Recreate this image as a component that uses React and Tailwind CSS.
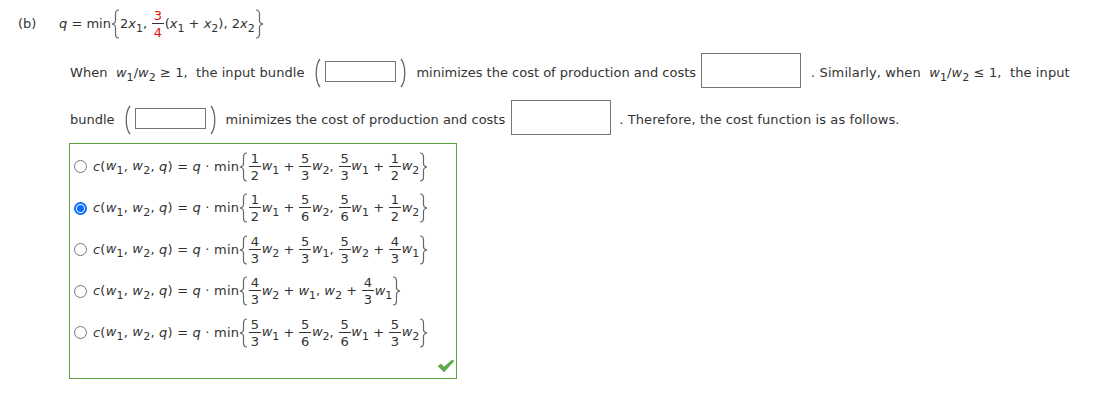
import React from 'react';

function Frac({ n, d, red }) {
  return (
    <span className={`inline-flex flex-col items-center align-middle mx-[0.750px] leading-none w-[12px] ${red ? 'text-[#e0101a]' : ''}`}>
      <span className="h-[16px] leading-[15px] border-b border-[#333] w-full text-center">{n}</span>
      <span className="h-[16px] leading-[17px]">{d}</span>
    </span>
  );
}

function V({ c, s }) {
  return (
    <span className="whitespace-nowrap">
      <i>{c}</i>
      {s && <span className="text-[11px] relative top-[4px]">{s}</span>}
    </span>
  );
}

function Brace({ right }) {
  return (
    <svg width="9" height="30" viewBox="0 0 9 30" className={`inline-block align-middle ${right ? '-scale-x-100' : ''}`}>
      <path d="M8 1 C5 1 4.500 2.500 4.500 5 L4.500 11.500 C4.500 13.500 3.500 14.500 1 15 C3.500 15.500 4.500 16.500 4.500 18.500 L4.500 25 C4.500 27.500 5 29 8 29" fill="none" stroke="#666" strokeWidth="1.200" />
    </svg>
  );
}

function Paren({ right }) {
  return (
    <svg width="9" height="30" viewBox="0 0 9 30" className={`inline-block shrink-0 ${right ? '-scale-x-100' : ''}`}>
      <path d="M7 1 C2 7 2 23 7 29" fill="none" stroke="#666" strokeWidth="1.300" />
    </svg>
  );
}

function Term({ n, d, v, s }) {
  return (
    <>
      <Frac n={n} d={d} />
      <V c={v} s={s} />
    </>
  );
}

function Option({ checked, children }) {
  return (
    <div className="h-[41.500px] flex items-center whitespace-nowrap">
      {checked ? (
        <span className="w-[13px] h-[13px] rounded-full border-2 border-[#0a6cff] flex items-center justify-center shrink-0">
          <span className="w-[7px] h-[7px] rounded-full bg-[#0a6cff]" />
        </span>
      ) : (
        <span className="w-[13px] h-[13px] rounded-full border border-[#767676] bg-white shrink-0" />
      )}
      <span className="ml-[6px]">
        <span className="tracking-[0.200px]">
          <V c="c" />(<V c="w" s="1" />, <V c="w" s="2" />, <V c="q" />) = <V c="q" /> · min
        </span>
        <Brace />
        {children}
        <Brace right />
      </span>
    </div>
  );
}

export default function App() {
  return (
    <div className="w-[1096px] h-[407px] bg-white text-[#333] text-[13px] font-['Verdana','DejaVu_Sans',sans-serif] pt-[6px] pl-[18px]">
      <div className="flex items-center h-[36px] whitespace-nowrap">
        <span className="w-[41px]">(b)</span>
        <span>
          <V c="q" /> = min
          <Brace />
          2<V c="x" s="1" />, <Frac n="3" d="4" red />(<V c="x" s="1" /> + <V c="x" s="2" />), 2<V c="x" s="2" />
          <Brace right />
        </span>
      </div>

      <div className="ml-[52px]">
        <div className="flex items-center h-[35px] mt-[11px] whitespace-nowrap">
          <span className="pt-[4px] tracking-[0.050px]">When&nbsp; <V c="w" s="1" />/<V c="w" s="2" /> ≥ 1,&nbsp; the input bundle</span>
          <span className="ml-[9px] pt-[4px] flex items-center">
            <Paren />
            <span className="w-[71px] h-[21px] border border-[#767676] mx-[3px] -mt-[2px]" />
            <Paren right />
          </span>
          <span className="ml-[8px] pt-[4px]">minimizes the cost of production and costs</span>
          <span className="w-[100px] h-[35px] border border-[#767676] ml-[5px]" />
          <span className="ml-[10px] pt-[4px] tracking-[0.100px]">. Similarly, when&nbsp; <V c="w" s="1" />/<V c="w" s="2" /> ≤ 1,&nbsp; the input</span>
        </div>

        <div className="flex items-center h-[35px] mt-[12px] whitespace-nowrap">
          <span className="pt-[4px]">bundle</span>
          <span className="ml-[8px] pt-[4px] flex items-center">
            <Paren />
            <span className="w-[71px] h-[21px] border border-[#767676] mx-[3px] -mt-[2px]" />
            <Paren right />
          </span>
          <span className="ml-[8px] pt-[4px]">minimizes the cost of production and costs</span>
          <span className="w-[100px] h-[35px] border border-[#767676] ml-[6px]" />
          <span className="ml-[8px] pt-[4px] tracking-[0.100px]">. Therefore, the cost function is as follows.</span>
        </div>

        <div className="relative w-[388px] h-[236px] border border-[#5b9e3c] mt-[8px] -ml-px px-[4px] py-[2px]">
          <Option>
            <Term n="1" d="2" v="w" s="1" /> + <Term n="5" d="3" v="w" s="2" />, <Term n="5" d="3" v="w" s="1" /> + <Term n="1" d="2" v="w" s="2" />
          </Option>
          <Option checked>
            <Term n="1" d="2" v="w" s="1" /> + <Term n="5" d="6" v="w" s="2" />, <Term n="5" d="6" v="w" s="1" /> + <Term n="1" d="2" v="w" s="2" />
          </Option>
          <Option>
            <Term n="4" d="3" v="w" s="2" /> + <Term n="5" d="3" v="w" s="1" />, <Term n="5" d="3" v="w" s="2" /> + <Term n="4" d="3" v="w" s="1" />
          </Option>
          <Option>
            <Term n="4" d="3" v="w" s="2" /> + <V c="w" s="1" />, <V c="w" s="2" /> + <Term n="4" d="3" v="w" s="1" />
          </Option>
          <Option>
            <Term n="5" d="3" v="w" s="1" /> + <Term n="5" d="6" v="w" s="2" />, <Term n="5" d="6" v="w" s="1" /> + <Term n="5" d="3" v="w" s="2" />
          </Option>
          <svg width="18" height="14" viewBox="0 0 18 14" className="absolute right-[1px] bottom-[5px]">
            <path d="M1 7 L4 5 L7 8 L15 1 L17 2 L7 13 Z" fill="#5cab4a" stroke="#4a9a3c" strokeWidth="0.500" />
          </svg>
        </div>
      </div>
    </div>
  );
}
